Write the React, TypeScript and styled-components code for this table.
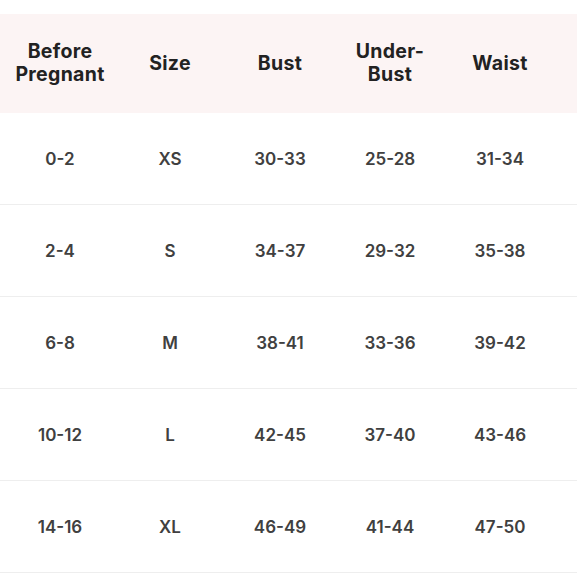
import React from 'react';
import styled, { createGlobalStyle } from "styled-components";

const GlobalStyle = createGlobalStyle`
  html, body {
    margin: 0;
    padding: 0;
    background: #ffffff;
  }
`;

const Page = styled.div`
  width: 580px;
  height: 580px;
  padding-top: 14px;
  box-sizing: border-box;
  background: #ffffff;
  font-family: Inter, "Liberation Sans", sans-serif;
  overflow: hidden;
`;

const Table = styled.div`
  width: 577px;
`;

const Row = styled.div<{ $header?: boolean }>`
  display: grid;
  grid-template-columns: repeat(5, 110px);
  padding-left: 5px;
  height: ${p => (p.$header ? '98px' : '91px')};
  background: ${p => (p.$header ? '#fcf4f4' : '#ffffff')};
  border-bottom: 1px solid ${p => (p.$header ? '#fcf4f4' : '#eeeeee')};
  align-items: center;
`;

const HeadCell = styled.div`
  text-align: center;
  font-size: 19.5px;
  font-weight: 700;
  line-height: 23px;
  color: #222222;
  letter-spacing: 0.3px;
`;

const Cell = styled.div`
  text-align: center;
  font-size: 17px;
  font-weight: 600;
  color: #404040;
`;

const headers = [
  ['Before', 'Pregnant'],
  ['Size'],
  ['Bust'],
  ['Under-', 'Bust'],
  ['Waist'],
];

const rows = [
  ['0-2', 'XS', '30-33', '25-28', '31-34'],
  ['2-4', 'S', '34-37', '29-32', '35-38'],
  ['6-8', 'M', '38-41', '33-36', '39-42'],
  ['10-12', 'L', '42-45', '37-40', '43-46'],
  ['14-16', 'XL', '46-49', '41-44', '47-50'],
];

const App: React.FC = () => {
  return (
    <Page>
      <GlobalStyle />
      <Table>
        <Row $header>
          {headers.map((lines, i) => (
            <HeadCell key={i}>
              {lines.map((l, j) => (
                <div key={j}>{l}</div>
              ))}
            </HeadCell>
          ))}
        </Row>
        {rows.map((r, i) => (
          <Row key={i}>
            {r.map((v, j) => (
              <Cell key={j}>{v}</Cell>
            ))}
          </Row>
        ))}
      </Table>
    </Page>
  );
};

export default App;
